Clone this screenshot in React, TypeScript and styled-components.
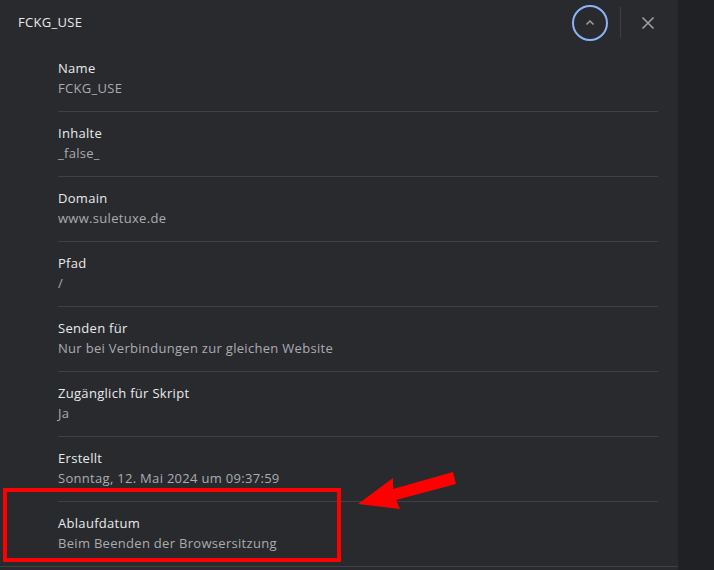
import React from 'react';
import styled, { createGlobalStyle } from 'styled-components';

const GlobalStyle = createGlobalStyle`
  html, body {
    margin: 0;
    padding: 0;
    background: #202124;
  }
  body {
    font-family: 'Open Sans', 'Noto Sans', sans-serif;
    letter-spacing: 0.3px;
  }
`;

const Screen = styled.div`
  position: relative;
  display: flex;
  width: 714px;
  height: 570px;
  overflow: hidden;
  background: #202124;
`;

const Panel = styled.div`
  width: 678px;
  height: 570px;
  background: #292a2e;
  display: flex;
  flex-direction: column;
`;

const Header = styled.div`
  height: 45px;
  display: flex;
  align-items: center;
  padding: 0 23px 0 18px;
`;

const Title = styled.div`
  flex: 1;
  font-size: 13px;
  color: #e8eaed;
  padding-bottom: 1px;
`;

const CollapseButton = styled.button`
  width: 36px;
  height: 36px;
  border-radius: 50%;
  border: 2px solid #8ab4f8;
  background: transparent;
  display: flex;
  align-items: center;
  justify-content: center;
  padding: 0;
  margin-right: 12px;
`;

const Separator = styled.div`
  width: 1px;
  height: 31px;
  background: #3c4043;
  margin-right: 20px;
`;

const CloseButton = styled.button`
  width: 14px;
  height: 14px;
  border: none;
  background: transparent;
  padding: 0;
  display: flex;
`;

const List = styled.div`
  padding: 1px 20px 0 58px;
`;

const Item = styled.div<{ last?: boolean }>`
  padding: 11px 0 13px;
  border-bottom: 1px solid #3f4146;
  margin-left: ${(p) => (p.last ? '-58px' : '0')};
  margin-right: ${(p) => (p.last ? '-20px' : '0')};
  padding-left: ${(p) => (p.last ? '58px' : '0')};

  &:first-child {
    padding-top: 12px;
  }
`;

const Label = styled.div`
  font-size: 13px;
  line-height: 20px;
  color: #e8eaed;
`;

const Value = styled.div`
  font-size: 13px;
  line-height: 20px;
  color: #a9acb1;
`;

const Highlight = styled.div`
  position: absolute;
  left: 3px;
  top: 488px;
  width: 330px;
  height: 66px;
  border: 4px solid #ff0000;
`;

const Arrow = styled.svg`
  position: absolute;
  left: 350px;
  top: 465px;
`;

const rows: [string, string][] = [
  ['Name', 'FCKG_USE'],
  ['Inhalte', '_false_'],
  ['Domain', 'www.suletuxe.de'],
  ['Pfad', '/'],
  ['Senden für', 'Nur bei Verbindungen zur gleichen Website'],
  ['Zugänglich für Skript', 'Ja'],
  ['Erstellt', 'Sonntag, 12. Mai 2024 um 09:37:59'],
  ['Ablaufdatum', 'Beim Beenden der Browsersitzung'],
];

export default function App() {
  return (
    <Screen>
      <GlobalStyle />
      <Panel>
        <Header>
          <Title>FCKG_USE</Title>
          <CollapseButton>
            <svg width="14" height="14" viewBox="0 0 14 14">
              <path d="M3.5 8.5 L7 5 L10.5 8.5" fill="none" stroke="#9aa0a6" strokeWidth="1.5" />
            </svg>
          </CollapseButton>
          <Separator />
          <CloseButton>
            <svg width="14" height="14" viewBox="0 0 14 14">
              <path d="M1.5 1.5 L12.5 12.5 M12.5 1.5 L1.5 12.5" stroke="#9aa0a6" strokeWidth="1.6" />
            </svg>
          </CloseButton>
        </Header>
        <List>
          {rows.map(([label, value], i) => (
            <Item key={label} last={i === rows.length - 1}>
              <Label>{label}</Label>
              <Value>{value}</Value>
            </Item>
          ))}
        </List>
      </Panel>
      <Highlight />
      <Arrow width="110" height="50" viewBox="0 0 110 50">
        <polygon points="8,39 43,13 43,24 103,7 106,19 46,35 50,44" fill="#ff0000" />
      </Arrow>
    </Screen>
  );
}
